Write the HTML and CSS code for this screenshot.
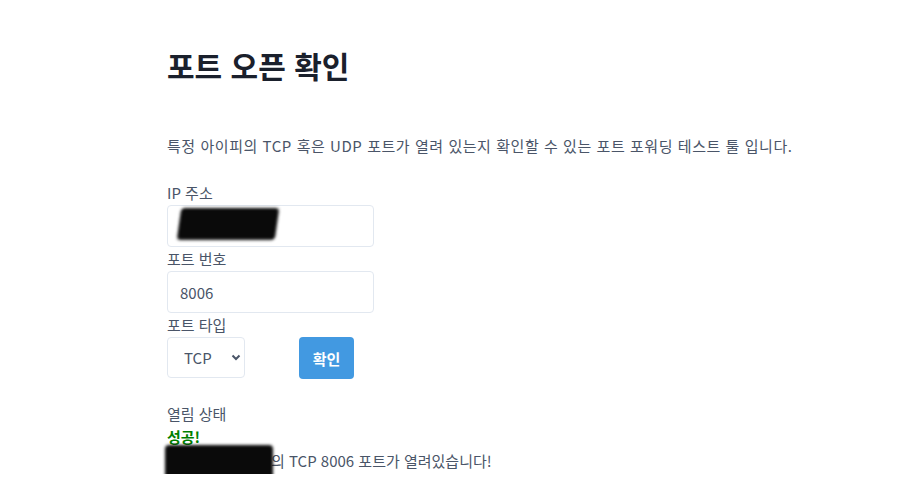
FILE: index.html
```html
<!DOCTYPE html>
<html lang="ko">
<head>
    <meta charset="UTF-8">
    <meta name="viewport" content="width=device-width, initial-scale=1.0">
    <title>포트 오픈 확인</title>
    <link rel="stylesheet" href="styles.css">
</head>
<body>

    <div class="container">
        <h1>포트 오픈 확인</h1>
        <p class="desc">특정 아이피의 TCP 혹은 UDP 포트가 열려 있는지 확인할 수 있는 포트 포워딩 테스트 툴 입니다.</p>

        <label for="ip">IP 주소</label>
        <div class="field">
            <input type="text" id="ip" value="">
            <span class="redact redact-ip"></span>
        </div>

        <label for="port">포트 번호</label>
        <input type="text" id="port" value="8006">

        <label for="type">포트 타입</label>
        <div class="row">
            <div class="select-wrap">
                <select id="type">
                    <option>TCP</option>
                    <option>UDP</option>
                </select>
                <svg class="chevron" width="10" height="7" viewBox="0 0 10 7"><path d="M1.5 1.5 L5 5 L8.5 1.5" fill="none" stroke="#4a5568" stroke-width="2"/></svg>
            </div>
            <button class="btn">확인</button>
        </div>

        <p class="status-label">열림 상태</p>
        <p class="success">성공!</p>
        <p class="result"><span class="redact redact-result"></span>의 TCP 8006 포트가 열려있습니다!</p>
    </div>

</body>
</html>
```

FILE: styles.css
```css
body {
    margin: 0;
    font-family: "Noto Sans CJK KR", "Noto Sans", sans-serif;
    background: #fff;
    color: #4a5568;
}
.container {
    padding: 40px 0 0 167px;
    width: 700px;
}
h1 {
    margin: 0;
    font-size: 30px;
    font-weight: 700;
    color: #1a202c;
    line-height: 50px;
}
.desc {
    margin: 44px 0 23px;
    font-size: 15px;
    letter-spacing: 0.55px;
    line-height: 24px;
}
label, .status-label {
    display: block;
    font-size: 15px;
    line-height: 24px;
    margin: 0;
}
input, select {
    box-sizing: border-box;
    font-family: inherit;
    font-size: 15px;
    color: #4a5568;
    border: 1px solid #e2e8f0;
    border-radius: 4px;
    background: #fff;
    outline: none;
}
input {
    display: block;
    width: 207px;
    height: 42px;
    padding: 0 12px;
}
.field {
    position: relative;
    width: 207px;
}
.redact {
    background: #0a0a0a;
    border-radius: 4px;
    filter: blur(1.5px);
}
.redact-ip {
    position: absolute;
    left: 12px;
    top: 3px;
    width: 98px;
    height: 32px;
    transform: skewX(-8deg);
}
.row {
    display: flex;
    align-items: flex-start;
    gap: 54px;
}
.select-wrap {
    position: relative;
    width: 78px;
}
select {
    appearance: none;
    -webkit-appearance: none;
    width: 78px;
    height: 41px;
    padding: 0 0 0 16px;
}
.chevron {
    position: absolute;
    right: 4px;
    top: 17px;
    pointer-events: none;
}
.btn {
    width: 55px;
    height: 42px;
    border: none;
    border-radius: 4px;
    background: #4299e1;
    color: #fff;
    font-family: inherit;
    font-size: 15px;
    font-weight: 700;
    cursor: pointer;
}
.status-label {
    margin-top: 23px;
}
.success {
    margin: 0;
    color: #008000;
    font-weight: 700;
    font-size: 15px;
    line-height: 22px;
}
.result {
    margin: 0;
    font-size: 15px;
    line-height: 26px;
    color: #4a5568;
}
.redact-result {
    display: inline-block;
    width: 108px;
    height: 35px;
    vertical-align: middle;
    margin: -6px -2px -6px -2px;
}
```
